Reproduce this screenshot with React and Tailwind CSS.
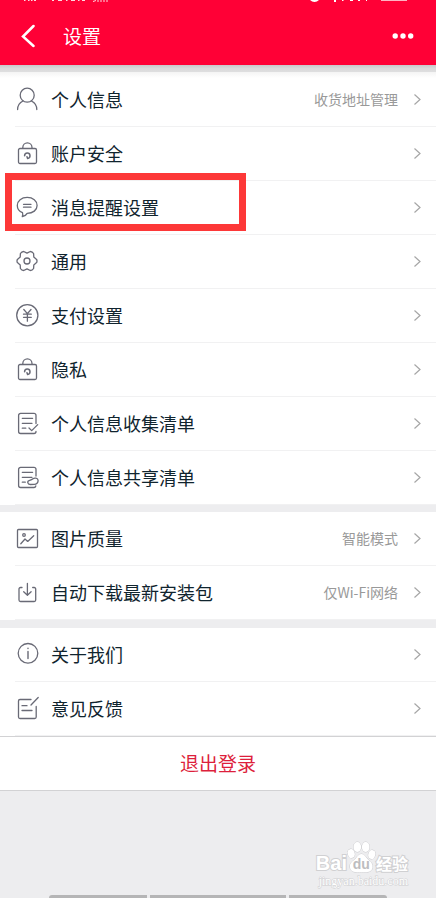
function Icon({ children }) {
    return (
        <svg
            width="25"
            height="25"
            viewBox="0 0 25 25"
            fill="none"
            stroke="currentColor"
            strokeWidth="1.3"
            strokeLinecap="round"
            strokeLinejoin="round"
            className="shrink-0 text-[#696a76]"
            aria-hidden="true"
        >
            {children}
        </svg>
    );
}

function UserIcon() {
    return (
        <Icon>
            <circle cx="12.2" cy="8.2" r="7" />
            <path d="M2.6 22.6C2.6 18.6 4.6 15.6 8 14M16.4 14c3.4 1.6 5.4 4.6 5.4 8.6" />
        </Icon>
    );
}

function LockIcon() {
    return (
        <Icon>
            <rect x="3.5" y="7.5" width="18" height="15" rx="1.5" />
            <path d="M7.8 7.3V6.500a4.600 4.600 0 0 1 9.200 0v.8" />
            <path d="M9.600 14.800a2.700 2.700 0 1 1 3 2.700l-.6-1.800" strokeWidth="1.5" />
        </Icon>
    );
}

function ChatIcon() {
    return (
        <Icon>
            <path d="M7.5 17.6C4.2 16.3 2.3 13.5 2.3 10.4 2.3 5.8 6.5 2.4 12.2 2.4s9.900 3.400 9.900 8-4.200 8-9.900 8c-.7 1.400-2.400 2.600-4.900 3.200.6-1.300.6-2.600.2-4z" />
            <path d="M8.5 9.3h7.5M8.5 12.2h7.5" />
        </Icon>
    );
}

function GearIcon() {
    return (
        <Icon>
            <path d="M21.6 10.4Q22.4 12 21.6 13.6L18.8 15.900 18.600 19.500Q17.400 21.400 15.300 21.500L12 19.800 8.700 21.500Q6.600 21.400 5.400 19.500L5.200 15.900 2.400 13.600Q1.600 12 2.400 10.400L5.200 8.100 5.400 4.500Q6.600 2.600 8.700 2.500L12 4.200 15.300 2.500Q17.400 2.600 18.600 4.500L18.800 8.100z" />
            <circle cx="12" cy="12" r="3" />
        </Icon>
    );
}

function YenIcon() {
    return (
        <Icon>
            <circle cx="12.3" cy="12.2" r="10.6" />
            <path d="M8.8 6.5l3.6 4.2L16 6.5M12.4 10.7v7.5M8.5 11.2h7.8M8.5 14.3h7.8" />
        </Icon>
    );
}

function ListCheckIcon() {
    return (
        <Icon>
            <path d="M21 12.5V4.4a2 2 0 0 0-2-2H5.6a2 2 0 0 0-2 2v16.1a2 2 0 0 0 2 2H19a2 2 0 0 0 2-2" />
            <path d="M7.3 7.3h10.3M7.3 12.3h9.7M7.3 17.2h3.5M14 17l2.7 2.6 6-6" />
        </Icon>
    );
}

function ListShareIcon() {
    return (
        <Icon>
            <path d="M21 11V4.4a2 2 0 0 0-2-2H5.6a2 2 0 0 0-2 2v16.1a2 2 0 0 0 2 2H19a2 2 0 0 0 1.8-1.5" />
            <path d="M7.3 7.3h10.3M7.3 12.3h9.7M7.3 17.2h3" />
            <path d="M14.7 15.3c1.500-.3 2.300-.6 3.300-1.500 1.300-1.200 4.900-.8 5.100 1.400.2 2.500-1.700 4.100-3.900 4.200l-3.900.1c-2.900 0-3.600-3.500-.6-4.200z" />
        </Icon>
    );
}

function PictureIcon() {
    return (
        <Icon>
            <rect x="2.5" y="3.5" width="20" height="18" rx="1" />
            <circle cx="9" cy="9" r="1.3" />
            <path d="M5.8 17.7l4.2-4.7 2.7 2.4 6-5.6" />
        </Icon>
    );
}

function DownloadIcon() {
    return (
        <Icon>
            <path d="M7 7.5H5.5A1.5 1.5 0 0 0 4 9v11a1.5 1.5 0 0 0 1.5 1.5h13.7a1.5 1.5 0 0 0 1.5-1.5V9a1.5 1.5 0 0 0-1.5-1.5h-1.5" />
            <path d="M12.4 3.5V15M8.7 11.7l3.7 3.5 3.7-3.5" />
        </Icon>
    );
}

function InfoIcon() {
    return (
        <Icon>
            <circle cx="13" cy="11.3" r="9.8" />
            <path d="M13 9.5v7M13 6.3v.2" strokeWidth="1.4" />
        </Icon>
    );
}

function FeedbackIcon() {
    return (
        <Icon>
            <path d="M16 3.5H5A1.5 1.5 0 0 0 3.5 5v16A1.5 1.5 0 0 0 5 22.5h14.7a1.5 1.5 0 0 0 1.5-1.5V10.5" />
            <path d="M7 9.7h5M7 14.5h10M16 9l7.2-7.5" />
        </Icon>
    );
}

function Chevron() {
    return (
        <svg width="8" height="11" viewBox="0 0 8 11" fill="none" stroke="#a6a6a6" strokeWidth="1.2" className="shrink-0" aria-hidden="true">
            <path d="M1.5 .5l5.5 5-5.5 5" />
        </svg>
    );
}

const groups = [
    [
        { label: "个人信息", icon: UserIcon, value: "收货地址管理" },
        { label: "账户安全", icon: LockIcon },
        { label: "消息提醒设置", icon: ChatIcon, highlighted: true },
        { label: "通用", icon: GearIcon },
        { label: "支付设置", icon: YenIcon },
        { label: "隐私", icon: LockIcon },
        { label: "个人信息收集清单", icon: ListCheckIcon },
        { label: "个人信息共享清单", icon: ListShareIcon },
    ],
    [
        { label: "图片质量", icon: PictureIcon, value: "智能模式" },
        { label: "自动下载最新安装包", icon: DownloadIcon, value: "仅Wi-Fi网络" },
    ],
    [
        { label: "关于我们", icon: InfoIcon },
        { label: "意见反馈", icon: FeedbackIcon },
    ],
];

function SettingRow({ item }) {
    const ItemIcon = item.icon;

    return (
        <li className="relative pl-[15px]">
            <a href="#" className="flex h-[54px] items-center border-b border-[#f1f1f2] pr-[15px]">
                <ItemIcon />
                <span className="ml-[11px] flex-1 pb-[2px] text-[18px] leading-6 text-[#10242e]">{item.label}</span>
                {item.value && <span className="mr-[15px] pb-[2px] text-sm text-[#999999]">{item.value}</span>}
                <Chevron />
            </a>
            {item.highlighted && (
                <div className="pointer-events-none absolute -top-2 left-[5px] h-[58px] w-[241px] border-[7px] border-[#fd3838]" />
            )}
        </li>
    );
}

function StatusBar() {
    return (
        <div className="flex h-1 items-start justify-between pr-7 pl-6" aria-hidden="true">
            <svg width="85" height="4" viewBox="0 0 85 4" fill="white" opacity=".85">
                <path d="M0 0h1.500v1H0zM4 0h1.500v1H4zM7 0h1.500v1H7zM10 0h2v1h-2zM28 0h2v1h-2zM34 0h4v1h-4zM42 0h1.500v1H42zM47 0h4v1h-4zM54 0h1.500v1H54zM58 0h3v1h-3z" />
                <path d="M69 1.500l3-1M74 0v2M77 0v2M80 0v2M83 0v2" stroke="white" strokeWidth="1" />
            </svg>
            <svg width="98" height="4" viewBox="0 0 98 4" fill="white">
                <path d="M0 0h9Q7 2 4.5 2T0 0zM24 0h2v2h-2zM32 0h1.5v1H32zM40 0h3v1h-3zM48 0h2v1h-2zM56 0h1v1h-1z" />
                <rect x="71" width="26" height="1" opacity=".7" />
            </svg>
        </div>
    );
}

function Header() {
    return (
        <header className="h-[65px] bg-[#ff0036] text-white">
            <StatusBar />
            <div className="flex h-16 items-center pr-[22px] pl-[21px]">
                <button type="button" aria-label="返回">
                    <svg width="14" height="24" viewBox="0 0 14 24" fill="none" stroke="currentColor" strokeWidth="2.5" strokeLinecap="round">
                        <path d="M12.5 2L2 12.5 12.5 22" />
                    </svg>
                </button>
                <h1 className="ml-7 flex-1 text-[19px] leading-6">设置</h1>
                <button type="button" aria-label="更多">
                    <svg width="22" height="6" viewBox="0 0 22 6" fill="currentColor">
                        <circle cx="3.2" cy="3" r="2.7" />
                        <circle cx="11" cy="3" r="2.7" />
                        <circle cx="18.7" cy="3" r="2.7" />
                    </svg>
                </button>
            </div>
        </header>
    );
}

function Watermark() {
    return (
        <div className="mr-7 flex flex-col items-end self-end text-white [-webkit-text-stroke:2px_#d0d0d2] [paint-order:stroke_fill]">
            <div className="flex h-8 items-end">
                <span className="font-['Liberation_Sans',sans-serif] text-[20px] leading-5 font-bold">Bai</span>
                <svg width="29" height="32" viewBox="-1 -2 29 32" fill="#fff" stroke="#cbcbce" strokeWidth="1" aria-hidden="true">
                    <ellipse cx="9.300" cy="4" rx="3.800" ry="5" />
                    <ellipse cx="17.700" cy="4" rx="3.800" ry="5" />
                    <ellipse cx="3.200" cy="10.500" rx="3.400" ry="4.500" transform="rotate(-15 3.200 10.500)" />
                    <ellipse cx="23.800" cy="11.500" rx="3.400" ry="4.500" transform="rotate(15 23.800 11.500)" />
                    <path d="M13.400 11c-3 0-4.500 3.500-7 5.800C3 19.300 1.500 21 2 24.500c.8 5.500 6.500 4.700 11.400 4.700S23.500 30 24.500 24.500c.6-3.500-1.500-5.200-4.200-7.700C18 14.500 16.500 11 13.400 11z" />
                    <text x="13.300" y="26" textAnchor="middle" fill="#bdbdc0" stroke="none" className="font-['Liberation_Sans',sans-serif] text-[14px] font-bold [-webkit-text-stroke:0px]">du</text>
                </svg>
                <span className="text-[16px] leading-5 font-bold">经验</span>
            </div>
            <span className="font-['Liberation_Serif',serif] text-[12px] leading-4 [-webkit-text-stroke:1px_#d0d0d2]">jingyan.baidu.com</span>
        </div>
    );
}

function App() {
    return (
        <div className="flex min-h-screen flex-col bg-[#ededef] font-['Noto_Sans_CJK_SC',sans-serif]">
            <Header />
            <div className="h-[7px] bg-linear-to-b from-[#c9c9ca] via-[#dadadb] to-[#dfdfe0]" />
            <div className="h-px bg-[#f5f5f5]" />

            <main className="flex flex-col">
                <div className="flex flex-col gap-[7px]">
                    <ul className="bg-white bg-linear-to-b from-[#f6f6f6] to-white to-[5px]">
                        {groups[0].map((item) => (
                            <SettingRow key={item.label} item={item} />
                        ))}
                    </ul>
                    <ul className="bg-white">
                        {groups[1].map((item) => (
                            <SettingRow key={item.label} item={item} />
                        ))}
                    </ul>
                </div>
                <ul className="mt-2 bg-white">
                    {groups[2].map((item) => (
                        <SettingRow key={item.label} item={item} />
                    ))}
                </ul>
                <button type="button" className="h-[55px] border-y border-[#d2d2d4] bg-white text-[19px] text-[#dd1f3c]">
                    退出登录
                </button>
            </main>

            <footer className="flex flex-1 flex-col justify-end">
                <Watermark />
                <div className="mt-[6px] flex justify-center gap-[3px] px-[49px]">
                    <div className="h-[3px] flex-[98] rounded-tl-sm bg-[#b5b5b6]" />
                    <div className="h-[3px] flex-[136] bg-[#b5b5b6]" />
                    <div className="h-[3px] flex-[98] rounded-tr-sm bg-[#b5b5b6]" />
                </div>
            </footer>
        </div>
    );
}

export default App;
